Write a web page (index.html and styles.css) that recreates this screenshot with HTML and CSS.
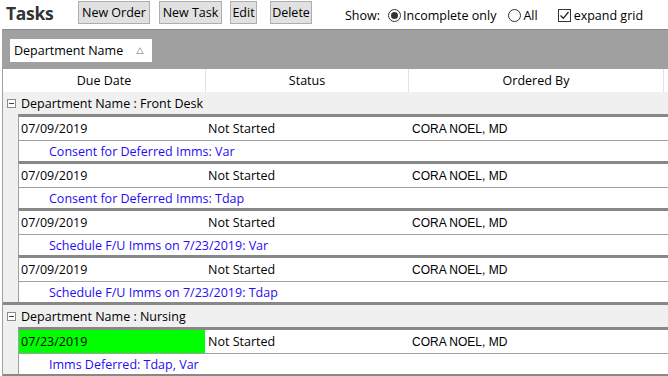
FILE: index.html
```html
<!DOCTYPE html>
<html>
<head>
<meta charset="utf-8">
<link rel="stylesheet" href="styles.css">
</head>
<body>
<div class="toolbar">
  <div class="title">Tasks</div>
  <button class="btn btn-order">New Order</button>
  <button class="btn btn-task">New Task</button>
  <button class="btn btn-edit">Edit</button>
  <button class="btn btn-delete">Delete</button>
  <div class="show">
    <span class="show-label">Show:</span>
    <span class="opt opt-inc"><span class="radio on"></span>Incomplete only</span>
    <span class="opt opt-all"><span class="radio"></span>All</span>
    <span class="opt opt-exp"><span class="checkbox"><svg width="11" height="11" viewBox="0 0 11 11"><path d="M1.5 5.5 L4.3 8.3 L9.5 2" fill="none" stroke="#222" stroke-width="1.3"/></svg></span>expand grid</span>
  </div>
</div>
<div class="grid">
  <div class="group-panel">
    <div class="chip"><span class="chip-text">Department Name</span><svg class="sort" width="8" height="7" viewBox="0 0 8 7"><path d="M4 0.8 L7.3 6.5 L0.7 6.5 Z" fill="none" stroke="#a8a8a8" stroke-width="1"/></svg></div>
  </div>
  <div class="header">
    <div class="hc c1">Due Date</div>
    <div class="hc c2">Status</div>
    <div class="hc c3">Ordered By</div>
  </div>
  <div class="group">
    <div class="group-row"><span class="expander"></span>Department Name : Front Desk</div>
    <div class="record">
      <div class="data"><div class="cell c1">07/09/2019</div><div class="cell c2">Not Started</div><div class="cell c3 by">CORA NOEL, MD</div></div>
      <div class="preview">Consent for Deferred Imms: Var</div>
    </div>
    <div class="record">
      <div class="data"><div class="cell c1">07/09/2019</div><div class="cell c2">Not Started</div><div class="cell c3 by">CORA NOEL, MD</div></div>
      <div class="preview">Consent for Deferred Imms: Tdap</div>
    </div>
    <div class="record">
      <div class="data"><div class="cell c1">07/09/2019</div><div class="cell c2">Not Started</div><div class="cell c3 by">CORA NOEL, MD</div></div>
      <div class="preview">Schedule F/U Imms on 7/23/2019: Var</div>
    </div>
    <div class="record">
      <div class="data"><div class="cell c1">07/09/2019</div><div class="cell c2">Not Started</div><div class="cell c3 by">CORA NOEL, MD</div></div>
      <div class="preview">Schedule F/U Imms on 7/23/2019: Tdap</div>
    </div>
  </div>
  <div class="group">
    <div class="group-row"><span class="expander"></span>Department Name : Nursing</div>
    <div class="record">
      <div class="data"><div class="cell c1 due">07/23/2019</div><div class="cell c2">Not Started</div><div class="cell c3 by">CORA NOEL, MD</div></div>
      <div class="preview">Imms Deferred: Tdap, Var</div>
    </div>
  </div>
</div>
</body>
</html>
```

FILE: styles.css
```css
* { box-sizing: border-box; }
html, body {
  margin: 0;
  padding: 0;
  background: #fff;
}
body {
  width: 668px;
  height: 376px;
  overflow: hidden;
  font-family: "Open Sans", "Noto Sans", sans-serif;
  font-size: 12.5px;
  color: #000;
  white-space: nowrap;
}
.toolbar {
  height: 29px;
  display: flex;
  align-items: flex-start;
  padding: 1px 0 0 6px;
}
.title {
  font-weight: bold;
  font-size: 17.5px;
  line-height: 24px;
  color: #333;
  width: 72px;
  letter-spacing: -0.3px;
}
.btn {
  height: 23px;
  margin: 0;
  padding: 0;
  font-family: inherit;
  font-size: 12.5px;
  color: #000;
  background: #e1e1e1;
  border: 1px solid #adadad;
  border-radius: 0;
  line-height: 20px;
}
.btn-order { width: 72px; }
.btn-task { width: 63px; margin-left: 9px; }
.btn-edit { width: 27px; margin-left: 8px; }
.btn-delete { width: 42px; margin-left: 13px; }
.show {
  display: flex;
  align-items: center;
  height: 28px;
  margin-left: 33px;
  color: #000;
}
.show-label { margin-right: 8px; }
.opt {
  display: flex;
  align-items: center;
}
.opt-all { margin-left: 12px; }
.opt-exp { margin-left: 20px; }
.radio {
  width: 13px;
  height: 13px;
  border: 1px solid #333;
  border-radius: 50%;
  margin-right: 2px;
  display: flex;
  align-items: center;
  justify-content: center;
}
.radio.on::after {
  content: "";
  width: 7px;
  height: 7px;
  border-radius: 50%;
  background: #333;
}
.checkbox {
  width: 13px;
  height: 13px;
  border: 1px solid #333;
  margin-right: 3px;
  display: flex;
  align-items: center;
  justify-content: center;
}
.grid {
  margin-left: 2px;
  border-left: 1px solid #a0a0a0;
}
.group-panel {
  height: 40px;
  background: #a0a0a0;
  border-top: 1px solid #8a8a8a;
  padding: 9px 0 0 7px;
}
.chip {
  width: 142px;
  height: 23px;
  background: #fff;
  display: flex;
  align-items: center;
  padding-left: 4px;
}
.chip .sort { margin-left: auto; margin-right: 8px; }
.header {
  height: 23px;
  display: flex;
  background: #fff;
}
.hc {
  display: flex;
  align-items: center;
  justify-content: center;
  border-right: 1px solid #e3e3e3;
}
.header .c1 { width: 203px; }
.header .c2 { width: 203px; }
.header .c3 { width: 255px; }
.group {
  background: #f0f0f0;
  border-bottom: 3px solid #888;
}
.group-row {
  height: 22px;
  display: flex;
  align-items: center;
  padding-left: 4px;
}
.expander {
  width: 9px;
  height: 9px;
  border: 1px solid #8c8c8c;
  background: #fff;
  margin-right: 5px;
  position: relative;
}
.expander::after {
  content: "";
  position: absolute;
  left: 1px;
  top: 3px;
  width: 5px;
  height: 1px;
  background: #444;
}
.record {
  margin-left: 15px;
  border-top: 3px solid #888;
  border-left: 1px solid #a0a0a0;
  background: #fff;
}
.data {
  height: 24px;
  display: flex;
  border-bottom: 1px solid #a0a0a0;
}
.cell {
  display: flex;
  align-items: center;
}
.data .c1 { width: 186px; padding-left: 2px; }
.data .c2 { width: 203px; padding-left: 3px; }
.data .c3 { padding-left: 4px; }
.due { background: #00ff00; }
.by {
  font-family: "Liberation Sans", Arial, sans-serif;
  font-size: 12px;
}
.preview {
  height: 20px;
  display: flex;
  align-items: center;
  padding-left: 30px;
  color: #1f0cf5;
}
```
